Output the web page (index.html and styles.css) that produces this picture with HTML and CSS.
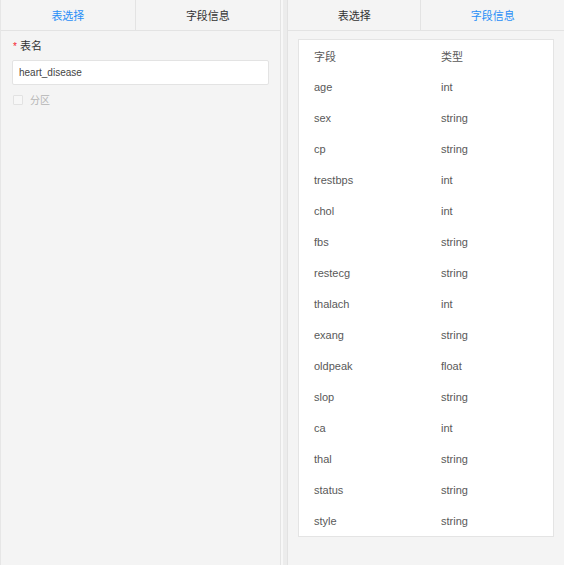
FILE: index.html
```html
<!DOCTYPE html>
<html lang="zh">
<head>
<meta charset="utf-8">
<title>表选择</title>
<link rel="stylesheet" href="styles.css">
</head>
<body>
<div class="app">
  <section class="panel panel-left">
    <div class="tabs">
      <div class="tab tab-active">表选择</div>
      <div class="tab">字段信息</div>
    </div>
    <div class="form">
      <div class="label"><span class="req">*</span>表名</div>
      <div class="input">heart_disease</div>
      <label class="check"><span class="box"></span><span class="check-text">分区</span></label>
    </div>
  </section>
  <div class="gutter"></div>
  <section class="panel panel-right">
    <div class="tabs">
      <div class="tab">表选择</div>
      <div class="tab tab-active">字段信息</div>
    </div>
    <div class="card">
      <div class="row"><span class="c1">字段</span><span class="c2">类型</span></div>
      <div class="row"><span class="c1">age</span><span class="c2">int</span></div>
      <div class="row"><span class="c1">sex</span><span class="c2">string</span></div>
      <div class="row"><span class="c1">cp</span><span class="c2">string</span></div>
      <div class="row"><span class="c1">trestbps</span><span class="c2">int</span></div>
      <div class="row"><span class="c1">chol</span><span class="c2">int</span></div>
      <div class="row"><span class="c1">fbs</span><span class="c2">string</span></div>
      <div class="row"><span class="c1">restecg</span><span class="c2">string</span></div>
      <div class="row"><span class="c1">thalach</span><span class="c2">int</span></div>
      <div class="row"><span class="c1">exang</span><span class="c2">string</span></div>
      <div class="row"><span class="c1">oldpeak</span><span class="c2">float</span></div>
      <div class="row"><span class="c1">slop</span><span class="c2">string</span></div>
      <div class="row"><span class="c1">ca</span><span class="c2">int</span></div>
      <div class="row"><span class="c1">thal</span><span class="c2">string</span></div>
      <div class="row"><span class="c1">status</span><span class="c2">string</span></div>
      <div class="row"><span class="c1">style</span><span class="c2">string</span></div>
    </div>
  </section>
</div>
</body>
</html>
```

FILE: styles.css
```css
html, body {
  margin: 0;
  padding: 0;
  background: #f4f4f4;
  font-family: "Liberation Sans", "Noto Sans CJK SC", sans-serif;
  color: #333;
}

.app {
  display: flex;
  width: 564px;
  height: 565px;
  overflow: hidden;
}

.panel {
  background: #f4f4f4;
  height: 565px;
  box-sizing: border-box;
}

.panel-left {
  width: 281px;
  border-left: 1px solid #e6e6e6;
  border-right: 1px solid #e4e4e4;
}

.gutter {
  width: 6px;
  height: 565px;
  background: #ececec;
  border-left: 2px solid #f7f7f7;
  box-sizing: border-box;
}

.panel-right {
  width: 277px;
  border-left: 1px solid #e2e2e2;
}

.tabs {
  display: flex;
  height: 31px;
  border-bottom: 1px solid #e3e3e3;
  box-sizing: border-box;
}

.tab {
  flex: 0 0 48.3%;
  display: flex;
  align-items: center;
  justify-content: center;
  font-size: 11px;
  color: #333;
  border-right: 1px solid #e3e3e3;
  box-sizing: border-box;
}

.tab + .tab {
  flex: 1;
  border-right: none;
}

.tab-active {
  color: #2a8ff7;
}

.form {
  padding: 8px 11px 0 11px;
}

.label {
  font-size: 11px;
  height: 14px;
  line-height: 14px;
  display: flex;
  align-items: center;
  padding-left: 1px;
}

.req {
  color: #f5222d;
  font-size: 10px;
  margin-right: 3px;
  position: relative;
  top: 1px;
}

.input {
  margin-top: 7px;
  height: 25px;
  width: 257px;
  box-sizing: border-box;
  background: #fff;
  border: 1px solid #e3e3e3;
  border-radius: 2px;
  font-size: 10px;
  line-height: 23px;
  padding-left: 6px;
  color: #444;
}

.check {
  display: flex;
  align-items: center;
  margin-top: 7px;
  padding-left: 1px;
}

.box {
  width: 10px;
  height: 10px;
  border: 1px solid #e2e2e2;
  border-radius: 1px;
  background: #f7f7f7;
  box-sizing: border-box;
}

.check-text {
  font-size: 10px;
  color: #b5b5b5;
  margin-left: 7px;
}

.card {
  margin: 8px 10px 0 10px;
  background: #fff;
  border: 1px solid #e4e4e4;
  box-sizing: border-box;
}

.row {
  display: flex;
  height: 31px;
  align-items: center;
  font-size: 11px;
  color: #595959;
}

.c1 {
  width: 142px;
  padding-left: 15px;
  box-sizing: border-box;
}

.c2 {
  flex: 1;
}
```
